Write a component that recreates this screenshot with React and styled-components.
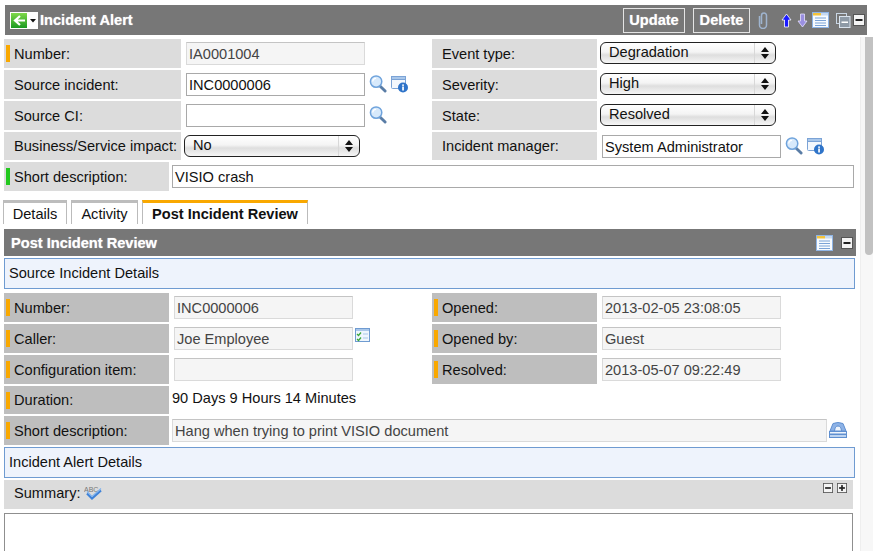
import React from "react"
import styled, { createGlobalStyle } from 'styled-components'

const Global = createGlobalStyle`
  html, body {
    margin: 0;
    height: 100%;
    background: #fff;
    overflow: hidden;
  }
  body {
    font-family: "Liberation Sans", Arial, sans-serif;
    font-size: 14.6px;
    color: #111;
  }
`

const Page = styled.div`
  width: 878px;
  height: 551px;
  overflow: hidden;
  padding-top: 5px;
  box-sizing: border-box;
`

const TopBar = styled.div`
  display: flex;
  align-items: center;
  box-sizing: border-box;
  width: 862px;
  height: 30px;
  margin-left: 5px;
  padding: 0 2px 0 5px;
  background: #777;
`

const TitleText = styled.span`
  font-weight: bold;
  font-size: 14.6px;
  color: #fff;
  text-shadow: 0 0 1px rgba(255, 255, 255, 0.7);
`

const BackButton = styled.div`
  display: flex;
  align-items: center;
  width: 28px;
  height: 17px;
  background: #fff;
  margin-right: 2px;
`

const Tools = styled.div`
  display: flex;
  align-items: center;
  margin-left: auto;
`

const ToolGap = styled.span`
  flex: none;
  width: ${p => p.$w}px;
`

const ActionButton = styled.div`
  box-sizing: border-box;
  height: 25px;
  width: ${p => p.$w}px;
  margin-right: 8px;
  border: 1px solid #e4e4e4;
  color: #fff;
  font-weight: bold;
  font-size: 14.6px;
  line-height: 23px;
  text-align: center;
  text-shadow: 0 0 1px rgba(255, 255, 255, 0.6);
`

const Under = styled.div`
  display: flex;
  margin-top: 2px;
`

const Content = styled.div`
  box-sizing: border-box;
  width: 860px;
  padding: 2px 0 0 4px;
`

const Track = styled.div`
  box-sizing: border-box;
  width: 13px;
  height: 514px;
  padding-left: 4px;
  background: #f7f7f7;
  border-left: 1px solid #eee;
`

const Thumb = styled.div`
  width: 8px;
  height: 218px;
  background: #c2c2c2;
  border-radius: 0 0 4px 4px;
`

const Row = styled.div`
  display: flex;
  height: ${p => (p.$short ? 28 : 29)}px;
  margin-bottom: 2px;
`

const Half = styled.div`
  display: flex;
  width: 428px;
  flex: none;
`

const Label = styled.div`
  display: flex;
  align-items: center;
  box-sizing: border-box;
  flex: none;
  width: ${p => p.$w}px;
  height: 100%;
  padding-left: 2px;
  background: ${p => (p.$dark ? "#bebebe" : "#dcdcdc")};
  white-space: nowrap;
`

const Flag = styled.i`
  flex: none;
  width: 4px;
  height: 17px;
  margin-right: 4px;
  background: ${p => p.$color || "transparent"};
`

const Field = styled.div`
  box-sizing: border-box;
  flex: none;
  width: ${p => p.$w}px;
  height: 23px;
  margin: 3px 0 0 ${p => p.$ml}px;
  padding-left: 2px;
  border: 1px solid ${p => (p.$ro ? "#dadada" : "#a9a9a9")};
  border-top-color: ${p => (p.$ro ? "#c4c4c4" : "#a9a9a9")};
  background: ${p => (p.$ro ? "#f5f5f5" : "#fff")};
  color: ${p => (p.$ro ? "#444" : "#111")};
  line-height: 22px;
  white-space: nowrap;
`

const Select = styled.div`
  display: flex;
  box-sizing: border-box;
  flex: none;
  width: 176px;
  height: 22px;
  margin: 3px 0 0 ${p => p.$ml}px;
  border: 1px solid #222;
  border-radius: 6px;
  background: linear-gradient(#fff, #f4f4f4 45%, #dedede 60%, #f6f6f6);
  line-height: 19px;
`

const SelectText = styled.span`
  flex: 1;
  padding-left: 8px;
`

const SelectArrows = styled.span`
  display: flex;
  align-items: center;
  justify-content: center;
  width: 20px;
  border-left: 1px solid #d8d8d8;
`

const FieldIcons = styled.div`
  display: flex;
  align-items: center;
  gap: 4px;
  height: 23px;
  margin: ${p => p.$mt ?? 2}px 0 0 ${p => p.$ml ?? 4}px;
`

const PlainValue = styled.div`
  margin-left: 3px;
  padding-top: 2px;
  line-height: 20px;
`

const Tabs = styled.div`
  display: flex;
  gap: 4px;
  margin: 9px 0 5px -1px;
`

const Tab = styled.div`
  box-sizing: border-box;
  height: 24px;
  width: ${p => p.$w}px;
  border: 1px solid #bbb;
  border-width: 3px 1px 0 1px;
  border-top-color: ${p => (p.$active ? "#f9a800" : "#bdbdbd")};
  font-weight: ${p => (p.$active ? "bold" : "normal")};
  text-align: center;
  line-height: 22px;
`

const SectionBar = styled.div`
  display: flex;
  align-items: center;
  box-sizing: border-box;
  width: 852px;
  height: 27px;
  padding: 0 3px 0 7px;
  margin-bottom: 2px;
  background: #777;
`

const BarIcons = styled.div`
  display: flex;
  align-items: center;
  gap: 8px;
  margin-left: auto;
`

const SubHeading = styled.div`
  box-sizing: border-box;
  width: 851px;
  height: 31px;
  padding-left: 4px;
  margin-bottom: ${p => p.$mb}px;
  background: #eef3fc;
  border: 1px solid #6f9bd1;
  line-height: 28px;
`

const SummaryBar = styled.div`
  display: flex;
  box-sizing: border-box;
  width: 849px;
  height: 29px;
  margin-bottom: 4px;
  padding: 0 6px 0 2px;
  background: #dcdcdc;
`

const SummaryText = styled.span`
  padding-top: 4px;
  line-height: 19px;
`

const Spell = styled.span`
  margin: 6px 0 0 3px;
`

const SizeIcons = styled.div`
  display: flex;
  gap: 4px;
  margin: 3px 0 0 auto;
`

const TextArea = styled.div`
  box-sizing: border-box;
  width: 849px;
  height: 60px;
  border: 1px solid #8f8f8f;
  background: #fff;
`

const Search = () => (
  <svg width="18" height="19" viewBox="0 0 19 20">
    <path d="M11 12l6 6" stroke="#5a7da6" strokeWidth="3" strokeLinecap="round" />
    <circle cx="7.5" cy="8" r="6" fill="#d7e9fb" stroke="#6fa3dc" strokeWidth="1.6" />
    <path d="M4 8a3.5 3.5 0 013.5-3.5" stroke="#fff" strokeWidth="1.4" fill="none" />
  </svg>
)

const RefInfo = () => (
  <svg width="18" height="18" viewBox="0 0 18 18">
    <rect x="0.5" y="1.5" width="14" height="12" rx="1" fill="#f4f8fd" stroke="#7ba3d6" />
    <rect x="0.5" y="1.5" width="14" height="3" fill="#a9c7ea" stroke="#7ba3d6" />
    <circle cx="12" cy="12.5" r="5" fill="#2f74c9" />
    <rect x="11.2" y="11.5" width="1.7" height="4" fill="#fff" />
    <rect x="11.2" y="9.4" width="1.7" height="1.5" fill="#fff" />
  </svg>
)

const Caret = () => (
  <svg width="12" height="16" viewBox="0 0 12 16">
    <path d="M6 2l4 5H2zM6 14l4-5H2z" fill="#111" />
  </svg>
)

const BackArrow = () => (
  <svg width="28" height="17" viewBox="0 0 28 17">
    <defs>
      <linearGradient id="backGreen" x1="0" y1="0" x2="0" y2="1">
        <stop offset="0" stopColor="#7fd84a" />
        <stop offset="1" stopColor="#1c9a22" />
      </linearGradient>
    </defs>
    <rect x="1" y="1" width="16" height="15" fill="url(#backGreen)" />
    <path d="M15 8.500H6M10 4L5 8.500 10 13" stroke="#fff" strokeWidth="2.2" fill="none" />
    <path d="M20 7h6l-3 3.500z" fill="#111" />
  </svg>
)

const Clip = () => (
  <svg width="10" height="17" viewBox="0 0 10 17">
    <path d="M1.500 4v9a3.500 3.500 0 007 0V3.500a2.500 2.500 0 00-5 0V12" stroke="#9fb4cf" strokeWidth="1.5" fill="none" />
  </svg>
)

const Arrow = ({ down, color, line }) => (
  <svg width="11" height="15" viewBox="0 0 11 15">
    <path
      d={down ? "M3.5 1h4v7H10l-4.5 6L1 8h2.5z" : "M3.5 14h4V7H10L5.5 1 1 7h2.5z"}
      fill={color}
      stroke={line}
      strokeWidth="0.8"
    />
  </svg>
)

const ListWin = () => (
  <svg width="17" height="16" viewBox="0 0 17 16">
    <rect x="0.5" y="0.5" width="16" height="15" fill="#f7fbff" stroke="#8fb5e6" />
    <rect x="1" y="1" width="8" height="2.5" fill="#f5c33b" />
    <rect x="9" y="1" width="7" height="2.5" fill="#c7d9ef" />
    <path d="M3 6h11M3 8.500h11M3 11h11M3 13.500h11" stroke="#7ba3d6" strokeWidth="1" />
  </svg>
)

const Layers = () => (
  <svg width="15" height="15" viewBox="0 0 15 15">
    <rect x="0.5" y="0.500" width="10" height="10" fill="none" stroke="#c9d6e4" />
    <rect x="3.500" y="3.500" width="10.500" height="11" fill="#8e9aa6" stroke="#d9e3ee" />
    <rect x="5.500" y="8.500" width="6.500" height="1.500" fill="#fff" />
  </svg>
)

const Toggle = ({ plus, size = 12 }) => (
  <svg width={size} height={size} viewBox="0 0 12 12">
    <rect x="0.5" y="0.5" width="11" height="11" fill="#f4f4f4" stroke="#555" />
    <rect x="2.500" y="5" width="7" height="2" fill="#222" />
    {plus && <rect x="5" y="2.500" width="2" height="7" fill="#222" />}
  </svg>
)

const CheckList = () => (
  <svg width="15" height="15" viewBox="0 0 15 15">
    <rect x="0.5" y="0.5" width="14" height="13" fill="#eef6fd" stroke="#6f9bd1" />
    <rect x="1" y="1" width="13" height="2" fill="#a9c7ea" />
    <path d="M2 6l1.500 1.500L6 4.500M2 11l1.500 1.500L6 9.500" stroke="#3aa63a" strokeWidth="1.300" fill="none" />
    <path d="M8 6h5M8 10h5" stroke="#a9c7ea" />
  </svg>
)

const Stamp = () => (
  <svg width="18" height="16" viewBox="0 0 18 16">
    <path d="M1 9l3-7.500Q9-0.500 14 1.500L17 9z" fill="#8db2e6" stroke="#5f8fd0" />
    <path d="M5.500 9Q6 4 9 4t3.500 5z" fill="#eef4fc" stroke="#5f8fd0" />
    <rect x="0.5" y="9.500" width="17" height="2.500" fill="#eef4fc" stroke="#5f8fd0" />
    <rect x="0.5" y="12.500" width="17" height="3" fill="#bcd3f0" stroke="#5f8fd0" />
  </svg>
)

const SpellCheck = () => (
  <svg width="19" height="14" viewBox="0 0 19 14">
    <text x="0" y="5.500" fontSize="7" fontFamily="Liberation Sans" fill="#777">ABC</text>
    <path d="M3 7.500l5 5 9-8" stroke="#3f82d8" strokeWidth="2.200" fill="none" />
    <path d="M3 5.500l5 5 9-8" stroke="#7fb2ee" strokeWidth="1.200" fill="none" />
  </svg>
)

const ORANGE = "#f9a800"

const App = () => {
  return (
    <Page>
      <Global />
      <TopBar>
        <BackButton><BackArrow /></BackButton>
        <TitleText>Incident Alert</TitleText>
        <Tools>
          <ActionButton $w={62}>Update</ActionButton>
          <ActionButton $w={57}>Delete</ActionButton>
          <Clip />
          <ToolGap $w={13} />
          <Arrow color="#1a1aff" line="#fff" />
          <ToolGap $w={5} />
          <Arrow down color="#9a8fe0" line="#e4e0ff" />
          <ToolGap $w={4} />
          <ListWin />
          <ToolGap $w={7} />
          <Layers />
          <ToolGap $w={2} />
          <Toggle />
        </Tools>
      </TopBar>
      <Under>
        <Content>
          <Row>
            <Half>
              <Label $w={177}><Flag $color={ORANGE} />Number:</Label>
              <Field $ro $w={179} $ml={5}>IA0001004</Field>
            </Half>
            <Label $w={165}><Flag />Event type:</Label>
            <Select $ml={3}><SelectText>Degradation</SelectText><SelectArrows><Caret /></SelectArrows></Select>
          </Row>
          <Row>
            <Half>
              <Label $w={177}><Flag />Source incident:</Label>
              <Field $w={179} $ml={5}>INC0000006</Field>
              <FieldIcons><Search /><RefInfo /></FieldIcons>
            </Half>
            <Label $w={165}><Flag />Severity:</Label>
            <Select $ml={3}><SelectText>High</SelectText><SelectArrows><Caret /></SelectArrows></Select>
          </Row>
          <Row>
            <Half>
              <Label $w={177}><Flag />Source CI:</Label>
              <Field $w={179} $ml={5} />
              <FieldIcons><Search /></FieldIcons>
            </Half>
            <Label $w={165}><Flag />State:</Label>
            <Select $ml={3}><SelectText>Resolved</SelectText><SelectArrows><Caret /></SelectArrows></Select>
          </Row>
          <Row $short>
            <Half>
              <Label $w={177}><Flag />Business/Service impact:</Label>
              <Select $ml={3}><SelectText>No</SelectText><SelectArrows><Caret /></SelectArrows></Select>
            </Half>
            <Label $w={165}><Flag />Incident manager:</Label>
            <Field $w={179} $ml={5}>System Administrator</Field>
            <FieldIcons><Search /><RefInfo /></FieldIcons>
          </Row>
          <Row>
            <Label $w={165}><Flag $color="#22c81e" />Short description:</Label>
            <Field $w={682} $ml={3}>VISIO crash</Field>
          </Row>

          <Tabs>
            <Tab $w={64}>Details</Tab>
            <Tab $w={67}>Activity</Tab>
            <Tab $w={166} $active>Post Incident Review</Tab>
          </Tabs>

          <SectionBar>
            <TitleText>Post Incident Review</TitleText>
            <BarIcons><ListWin /><Toggle /></BarIcons>
          </SectionBar>
          <SubHeading $mb={4}>Source Incident Details</SubHeading>

          <Row>
            <Half>
              <Label $w={165} $dark><Flag $color={ORANGE} />Number:</Label>
              <Field $ro $w={179} $ml={5}>INC0000006</Field>
            </Half>
            <Label $w={165} $dark><Flag $color={ORANGE} />Opened:</Label>
            <Field $ro $w={179} $ml={5}>2013-02-05 23:08:05</Field>
          </Row>
          <Row>
            <Half>
              <Label $w={165} $dark><Flag $color={ORANGE} />Caller:</Label>
              <Field $ro $w={179} $ml={5}>Joe Employee</Field>
              <FieldIcons $ml={2} $mt={0}><CheckList /></FieldIcons>
            </Half>
            <Label $w={165} $dark><Flag $color={ORANGE} />Opened by:</Label>
            <Field $ro $w={179} $ml={5}>Guest</Field>
          </Row>
          <Row>
            <Half>
              <Label $w={165} $dark><Flag $color={ORANGE} />Configuration item:</Label>
              <Field $ro $w={179} $ml={5} />
            </Half>
            <Label $w={165} $dark><Flag $color={ORANGE} />Resolved:</Label>
            <Field $ro $w={179} $ml={5}>2013-05-07 09:22:49</Field>
          </Row>
          <Row $short>
            <Label $w={165} $dark><Flag $color={ORANGE} />Duration:</Label>
            <PlainValue>90 Days 9 Hours 14 Minutes</PlainValue>
          </Row>
          <Row>
            <Label $w={165} $dark><Flag $color={ORANGE} />Short description:</Label>
            <Field $ro $w={655} $ml={3}>Hang when trying to print VISIO document</Field>
            <FieldIcons $ml={2}><Stamp /></FieldIcons>
          </Row>
          <SubHeading $mb={2}>Incident Alert Details</SubHeading>
          <SummaryBar>
            <Flag />
            <SummaryText>Summary:</SummaryText>
            <Spell><SpellCheck /></Spell>
            <SizeIcons><Toggle size={10} /><Toggle plus size={10} /></SizeIcons>
          </SummaryBar>
          <TextArea />
        </Content>
        <Track><Thumb /></Track>
      </Under>
    </Page>
  )
}

export default App
